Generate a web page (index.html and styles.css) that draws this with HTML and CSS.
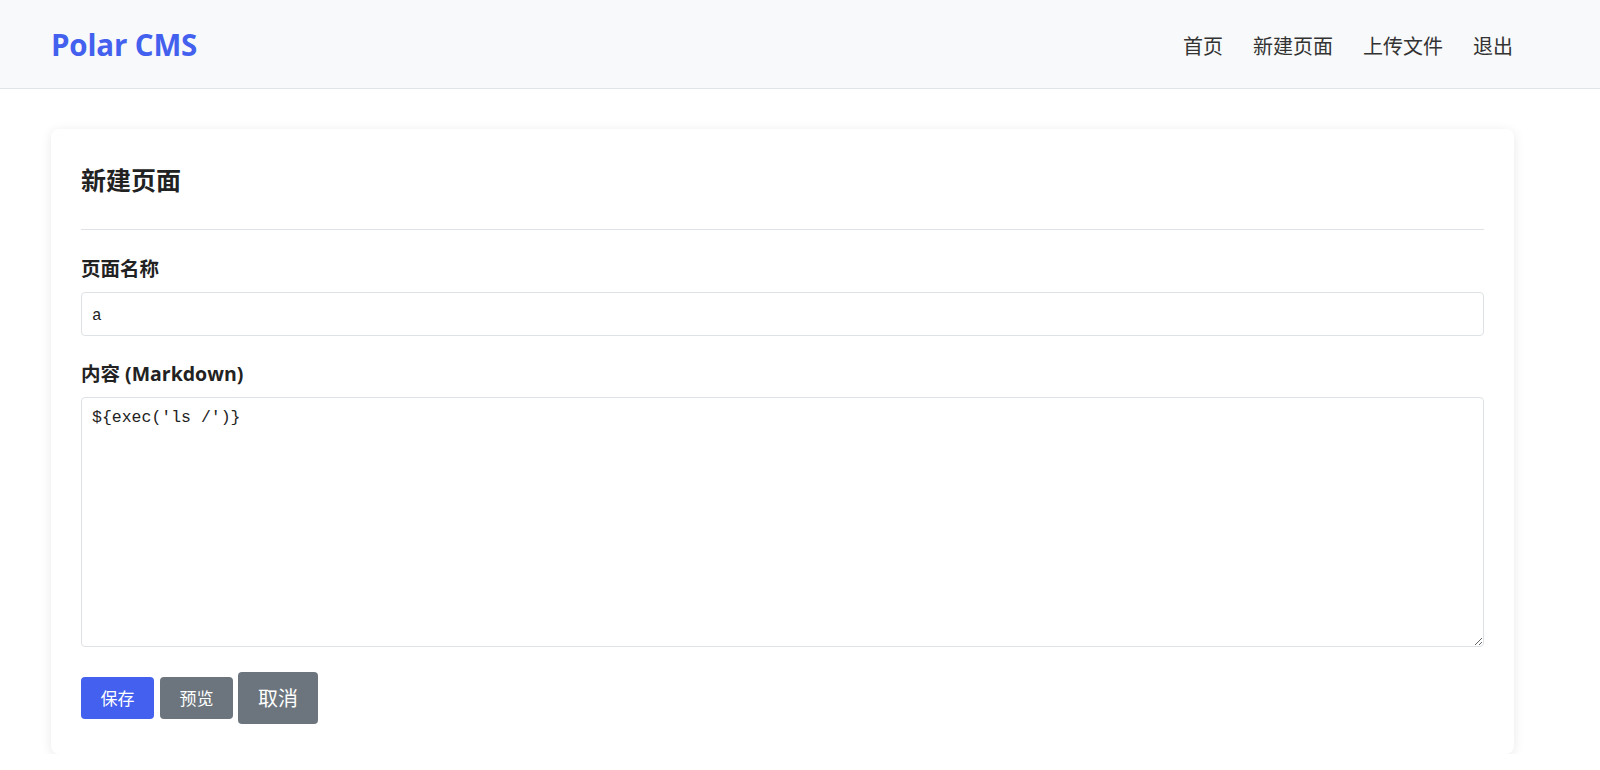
FILE: index.html
```html
<!DOCTYPE html>
<html lang="zh-CN">
<head>
<meta charset="utf-8">
<title>Polar CMS - 新建页面</title>
<link rel="stylesheet" href="styles.css">
</head>
<body>
<header class="site-header">
  <div class="container header-inner">
    <a class="logo" href="#">Polar CMS</a>
    <nav class="nav">
      <a href="#">首页</a>
      <a href="#">新建页面</a>
      <a href="#">上传文件</a>
      <a href="#">退出</a>
    </nav>
  </div>
</header>
<main class="container">
  <section class="card">
    <h2 class="card-title">新建页面</h2>
    <form class="form">
      <div class="form-group">
        <label class="label" for="name">页面名称</label>
        <input class="input" id="name" type="text" value="a">
      </div>
      <div class="form-group form-group-last">
        <label class="label" for="content">内容 (Markdown)</label>
        <textarea class="textarea" id="content">${exec('ls /')}</textarea>
      </div>
      <div class="actions">
        <button type="button" class="btn btn-primary">保存</button>
        <button type="button" class="btn btn-secondary btn-preview">预览</button>
        <a class="btn btn-secondary btn-large" href="#">取消</a>
      </div>
    </form>
  </section>
</main>
</body>
</html>
```
FILE: styles.css
```css
* { box-sizing: border-box; }
html, body { margin: 0; padding: 0; }
body {
  font-family: "Open Sans", "Noto Sans CJK SC", sans-serif;
  color: #333;
  background: #fff;
}
.container {
  margin-left: 51px;
  width: 1463px;
}
.site-header {
  background: #f8f9fa;
  border-bottom: 1px solid #e1e4e8;
}
.header-inner {
  height: 88px;
  display: flex;
  align-items: center;
  justify-content: space-between;
}
.logo {
  font-size: 29.5px;
  font-weight: 700;
  color: #4361ee;
  text-decoration: none;
  letter-spacing: -0.15px;
}
.nav {
  display: flex;
  gap: 30px;
  padding-top: 2px;
  padding-right: 1px;
}
.nav a {
  font-size: 20px;
  color: #333;
  text-decoration: none;
}
.card {
  margin-top: 40px;
  background: #fff;
  border-radius: 8px;
  box-shadow: 0 2px 12px rgba(0, 0, 0, 0.09);
  padding: 30px;
}
.card-title {
  margin: 0 0 24px;
  padding: 3px 0 29px;
  font-size: 25px;
  line-height: 1.5;
  font-weight: 700;
  color: #222;
  border-bottom: 1px solid #dee2e6;
}
.form-group {
  margin-bottom: 23px;
}
.form-group-last {
  margin-bottom: 24px;
}
.label {
  display: block;
  font-size: 19.5px;
  font-weight: 700;
  line-height: 30px;
  margin-bottom: 8px;
  color: #222;
}
.input, .textarea {
  display: block;
  width: 100%;
  border: 1px solid #dee2e6;
  border-radius: 4px;
  padding: 10px;
  font-family: "Liberation Mono", "DejaVu Sans Mono", monospace;
  color: #222;
  background: #fff;
}
.input {
  height: 44px;
  font-size: 16px;
  padding-top: 12px;
  padding-bottom: 8px;
}
.textarea {
  height: 250px;
  margin-top: 1px;
  font-size: 16.5px;
  resize: vertical;
  line-height: 1.2;
}
.actions {
  display: flex;
  align-items: center;
  gap: 5px;
  padding-top: 1px;
}
.btn {
  display: inline-flex;
  align-items: center;
  justify-content: center;
  border: none;
  border-radius: 4px;
  color: #fff;
  text-decoration: none;
  font-family: "Open Sans", "Noto Sans CJK SC", sans-serif;
  font-size: 17px;
  height: 42px;
  padding: 0 19.5px;
  cursor: pointer;
}
.btn-primary { background: #4361ee; }
.btn-secondary { background: #6c757d; }
.btn-preview { margin-left: 1px; }
.btn-large {
  font-size: 20px;
  height: 52px;
  padding: 0 20px;
}
```
